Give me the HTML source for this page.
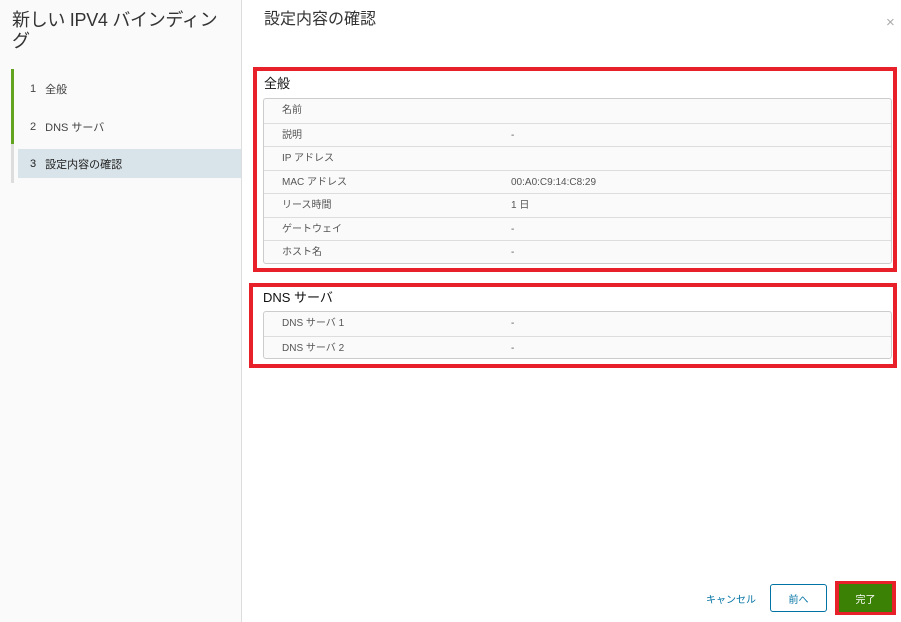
<!DOCTYPE html>
<html><head><meta charset="utf-8"><style>
*{box-sizing:border-box;margin:0;padding:0}
body{width:901px;height:622px;overflow:hidden;background:#fff;font-family:"Liberation Sans","Noto Sans CJK JP",sans-serif;position:relative;color:#333}
.left{position:absolute;left:0;top:0;width:242px;height:622px;background:#fafafa;border-right:1px solid #ddd}
.title{position:absolute;left:12px;top:10px;font-size:18px;line-height:21px;color:#333;width:215px;letter-spacing:-0.3px}
.bar{position:absolute;left:11px;width:3px}
.step{position:absolute;left:18px;width:223px;height:29px;font-size:11px;display:flex;align-items:center;padding-left:12px;color:#444}
.step span{margin-right:9px}
.h{position:absolute;left:264px;top:5px;font-size:16px;color:#333}
.close{position:absolute;left:886px;top:14px;font-size:15px;color:#aaa}
.red{position:absolute;border:4px solid #e8202a}
.sec{position:absolute;font-size:13px;color:#111}
.tbl{position:absolute;left:263px;width:629px;border:1px solid #ccc;border-radius:3px;background:#fafafa}
.row{height:23.5px;border-top:1px solid #ddd;font-size:10px;color:#555;position:relative}
.row:first-child{border-top:none}
.row .l,.row .v{position:absolute;top:5px;line-height:14px}
.row .l{left:18px}
.row .v{left:247px}
.btn{position:absolute;top:584px;height:28px;font-size:10px;display:flex;align-items:center;justify-content:center;border-radius:3px}
</style></head><body>
<div class="left">
<div class="title">新しい IPV4 バインディン<br>グ</div>
<div class="bar" style="top:69px;height:75px;background:#62a420"></div>
<div class="bar" style="top:144px;height:39px;background:#ddd"></div>
<div class="step" style="top:74px"><span>1</span>全般</div>
<div class="step" style="top:112px"><span>2</span>DNS サーバ</div>
<div class="step" style="top:149px;background:#d9e4ea;color:#222"><span>3</span>設定内容の確認</div>
</div>
<div class="h">設定内容の確認</div>
<div class="close">×</div>
<div class="red" style="left:253px;top:67px;width:644px;height:205px"></div>
<div class="sec" style="left:264px;top:73px">全般</div>
<div class="tbl" style="top:98px;height:166px">
<div class="row"><span class="l">名前</span></div>
<div class="row"><span class="l">説明</span><span class="v">-</span></div>
<div class="row"><span class="l">IP アドレス</span></div>
<div class="row"><span class="l">MAC アドレス</span><span class="v">00:A0:C9:14:C8:29</span></div>
<div class="row"><span class="l">リース時間</span><span class="v">1 日</span></div>
<div class="row"><span class="l">ゲートウェイ</span><span class="v">-</span></div>
<div class="row"><span class="l">ホスト名</span><span class="v">-</span></div>
</div>
<div class="red" style="left:249px;top:283px;width:648px;height:85px"></div>
<div class="sec" style="left:263px;top:287px">DNS サーバ</div>
<div class="tbl" style="top:311px;height:48px">
<div class="row"><span class="l">DNS サーバ 1</span><span class="v">-</span></div>
<div class="row"><span class="l">DNS サーバ 2</span><span class="v">-</span></div>
</div>
<div class="btn" style="left:700px;width:62px;color:#0072a3;border:none">キャンセル</div>
<div class="btn" style="left:770px;width:57px;color:#0072a3;border:1px solid #0072a3">前へ</div>
<div style="position:absolute;left:835px;top:581px;width:61px;height:34px;background:#e8202a"></div>
<div class="btn" style="left:839px;width:53px;background:#3b8106;color:#fff;border-radius:0">完了</div>
</body></html>
